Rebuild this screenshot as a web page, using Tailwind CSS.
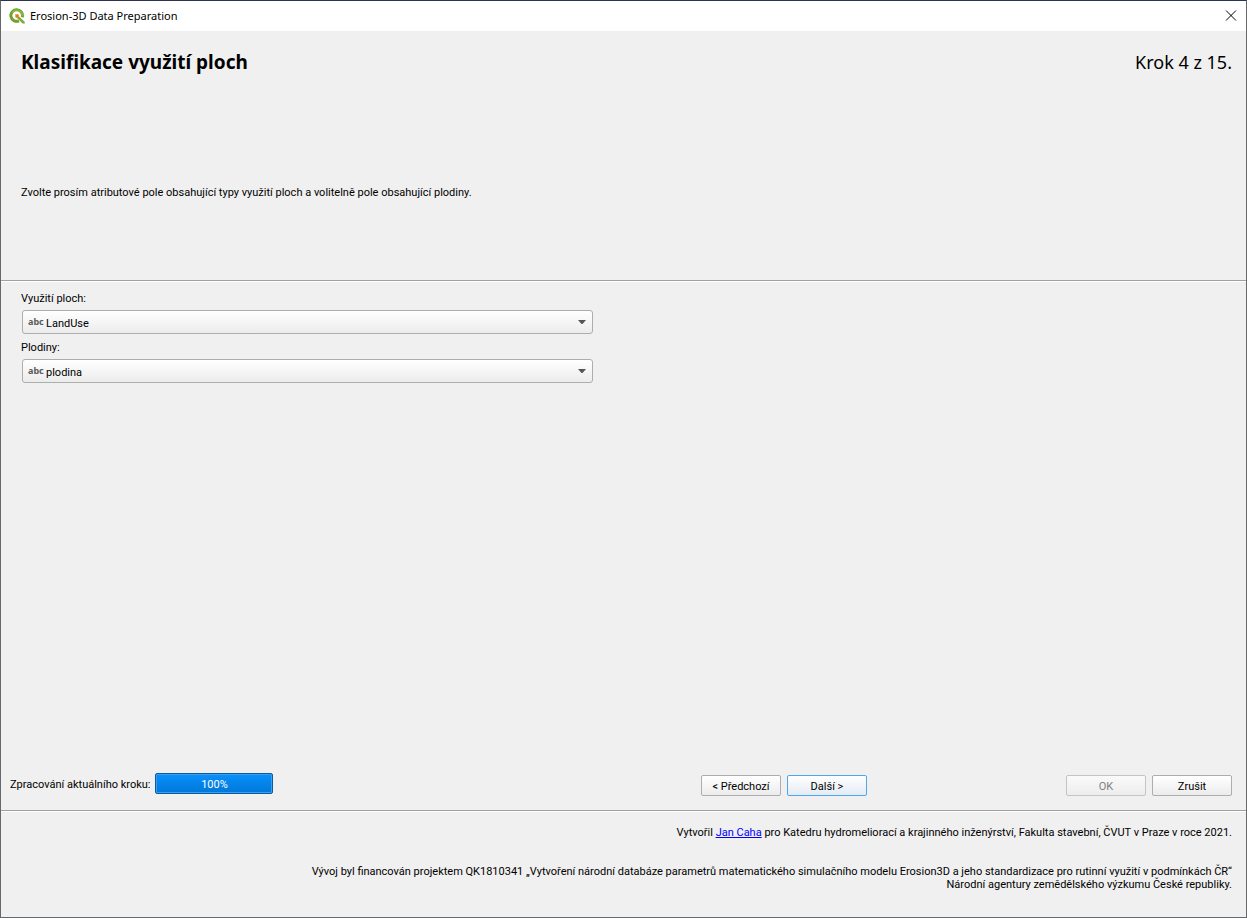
<!DOCTYPE html>
<html lang="cs">
<head>
    <meta charset="utf-8"/>
    <meta content="width=device-width, initial-scale=1.0" name="viewport"/>
    <title>Erosion-3D Data Preparation</title>
    <script src="https://cdn.jsdelivr.net/npm/@tailwindcss/browser@4"></script>
    <style>
        body, button, select {
            font-family: Roboto, 'Liberation Sans', sans-serif;
        }
        .title-font {
            font-family: 'Noto Sans', sans-serif;
        }
    </style>
</head>
<body class="bg-[#f0f0f0] text-black text-[11px] leading-[13px]">
    <div class="min-h-screen flex flex-col border border-[#66686c] border-t-[#2a3350]">
        <!-- Title bar -->
        <header class="h-[30px] bg-white flex items-center justify-between pl-2 pr-[9px]">
            <div class="flex items-center gap-[5px]">
                <svg class="w-4 h-4" viewBox="0 0 16 16" fill="none">
                    <path d="M10 12.800A5.800 5.800 0 1 1 13.200 9.200" stroke="#6fa032" stroke-width="3"/>
                    <path d="M3 4.200A6 6 0 0 1 13.600 8" stroke="#8cb83c" stroke-width="1.600"/>
                    <path d="M9.600 8l6.200 6v1.600h-2.200L8 10z" fill="#7cab35"/>
                    <path d="M6.300 6.300h3l.8 1.700-2 2-1.800-.8z" fill="#ee7913"/>
                </svg>
                <span class="title-font text-[11px] leading-4">Erosion-3D Data Preparation</span>
            </div>
            <button type="button" aria-label="Zavřít">
                <svg class="w-3 h-3" viewBox="0 0 12 12" stroke="#000" stroke-width="1">
                    <path d="M1 0.500l10 10M11 0.500L1 10.500"/>
                </svg>
            </button>
        </header>

        <!-- Step heading -->
        <section class="h-[250px] pl-5 pr-[14px] border-b border-[#a0a0a0]">
            <div class="title-font flex justify-between items-center pt-[19px] leading-6">
                <h1 class="text-[19px] font-bold">Klasifikace využití ploch</h1>
                <span class="text-[18px]">Krok 4 z 15.</span>
            </div>
            <p class="pt-28">Zvolte prosím atributové pole obsahující typy využití ploch a volitelně pole obsahující plodiny.</p>
        </section>

        <!-- Fields -->
        <main class="grow border-t border-white px-5 pt-[10px]">
            <form class="w-[573px] max-w-full flex flex-col">
                <label for="landUse">Využití ploch:</label>
                <div class="relative mt-[5px] mx-px mb-[7px]">
                    <span class="title-font absolute left-[6px] top-[6px] font-bold text-[9px] leading-3 text-[#5a5a5a] pointer-events-none">abc</span>
                    <select id="landUse" class="block appearance-none w-full h-6 pl-[23px] pr-6 pt-[2px] rounded-[3px] border border-[#adadad] bg-linear-to-b from-white to-[#ececec]">
                        <option>LandUse</option>
                    </select>
                    <svg class="absolute right-[7px] top-[10px] w-2 h-1 pointer-events-none" viewBox="0 0 8 4"><path d="M0 0h8L4.500 4h-1z" fill="#555"/></svg>
                </div>
                <label for="crops">Plodiny:</label>
                <div class="relative mt-[5px] mx-px">
                    <span class="title-font absolute left-[6px] top-[6px] font-bold text-[9px] leading-3 text-[#5a5a5a] pointer-events-none">abc</span>
                    <select id="crops" class="block appearance-none w-full h-6 pl-[23px] pr-6 pt-[2px] rounded-[3px] border border-[#adadad] bg-linear-to-b from-white to-[#ececec]">
                        <option>plodina</option>
                    </select>
                    <svg class="absolute right-[7px] top-[10px] w-2 h-1 pointer-events-none" viewBox="0 0 8 4"><path d="M0 0h8L4.500 4h-1z" fill="#555"/></svg>
                </div>
            </form>
        </main>

        <!-- Progress and buttons -->
        <div class="flex items-end pl-[9px] pr-[14px] pb-[14px] border-b border-[#a0a0a0]">
            <div class="flex-1 flex items-center gap-[5px] pb-[2px]">
                <span id="progressLabel" class="pt-px">Zpracování aktuálního kroku:</span>
                <div class="w-[118px] h-[21px] pt-px rounded-[2px] border border-[#0c5a9e] bg-linear-to-b from-[#0a90fb] to-[#0078d9] inset-ring inset-ring-[#3a9ff0] text-white flex items-center justify-center" role="progressbar" aria-labelledby="progressLabel" aria-valuenow="100">100%</div>
            </div>
            <div class="flex gap-[6px]">
                <button type="button" class="w-20 h-[21px] pt-px rounded-[2px] border border-[#adadad] bg-linear-to-b from-white to-[#ececec]">&lt; Předchozí</button>
                <button type="button" class="w-20 h-[21px] pt-px rounded-[2px] border border-[#4aa8f0] bg-linear-to-b from-white to-[#e4ebf3]">Další &gt;</button>
            </div>
            <div class="flex gap-[6px] ml-[199px]">
                <button type="button" disabled class="w-20 h-[21px] pt-px rounded-[2px] border border-[#c4c4c4] bg-linear-to-b from-[#fafafa] to-[#ededed] text-[#808080]">OK</button>
                <button type="button" class="w-20 h-[21px] pt-px rounded-[2px] border border-[#adadad] bg-linear-to-b from-white to-[#ececec]">Zrušit</button>
            </div>
        </div>

        <!-- Credits -->
        <footer class="border-t border-white pl-5 pr-[14px] pt-[14px] pb-[26px] text-right">
            <p>Vytvořil <a href="#" class="text-[#0000ff] underline">Jan Caha</a> pro Katedru hydromeliorací a krajinného inženýrství, Fakulta stavební, ČVUT v Praze v roce 2021.</p>
            <p class="mt-[26px]">Vývoj byl financován projektem QK1810341 „Vytvoření národní databáze parametrů matematického simulačního modelu Erosion3D a jeho standardizace pro rutinní využití v podmínkách ČR“<br/>Národní agentury zemědělského výzkumu České republiky.</p>
        </footer>
    </div>
</body>
</html>
